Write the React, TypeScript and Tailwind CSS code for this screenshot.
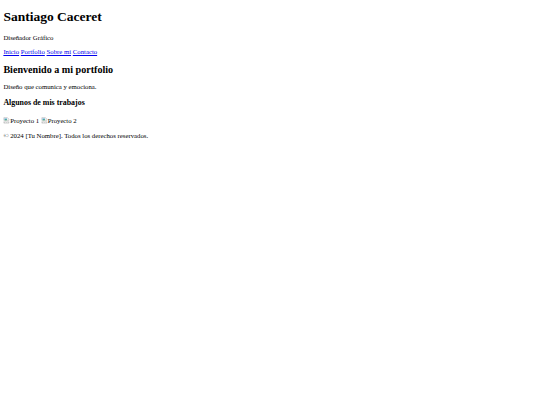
import React from "react";

// broken-image glyph, drawn small like the browser's placeholder
function BrokenImage() {
  return (
    <svg viewBox="0 0 16 16" className="inline-block w-[6.75px] h-[6.75px] align-[-0.5px]">
      <path d="M2 1.5h8.5l3.5 3.5v3l-2 1.5-2-1.5-2 1.5-2-1.5-2 1.5-2-1.5z" fill="#f5f5f5" stroke="#9a9a9a" />
      <path d="M2 11l2 1.5 2-1.5 2 1.5 2-1.5 2 1.5 2-1.5v3.5H2z" fill="#f5f5f5" stroke="#9a9a9a" />
      <rect x="3.5" y="3.5" width="6" height="4" fill="#5fa8e0" />
      <path d="M3.5 7.5l2-2 2 1.5 2-2v2.5z" fill="#4caf50" />
    </svg>
  );
}

const links = ["Inicio", "Portfolio", "Sobre mí", "Contacto"];

export default function App() {
  return (
    <div className="min-h-[405px] bg-white text-black px-[3.375px] pt-[9.05px] flex flex-col items-start font-['Liberation_Serif','Times_New_Roman',serif] leading-[normal]">
      <header className="flex flex-col items-start">
        <h1 className="text-[13.5px] font-bold">Santiago Caceret</h1>
        <p className="text-[6.75px] mt-[9.05px]">Diseñador Gráfico</p>
        <nav className="text-[6.75px] mt-[6.75px]">
          {links.map((l, i) => (
            <React.Fragment key={l}>
              {i > 0 && " "}
              <a href="#" className="text-[#0000ee] underline">
                {l}
              </a>
            </React.Fragment>
          ))}
        </nav>
      </header>

      <main className="flex flex-col items-start">
        <section className="flex flex-col items-start">
          <h2 className="text-[10.125px] font-bold mt-[8.9px]">Bienvenido a mi portfolio</h2>
          <p className="text-[6.75px] mt-[8.4px]">Diseño que comunica y emociona.</p>
        </section>
        <section className="flex flex-col items-start">
          <h3 className="text-[7.9px] font-bold mt-[7.9px]">Algunos de mis trabajos</h3>
          <div className="text-[6.75px] leading-[9px] mt-[9.4px]">
            <span>
              <BrokenImage />Proyecto 1
            </span>{" "}
            <span>
              <BrokenImage />Proyecto 2
            </span>
          </div>
        </section>
      </main>

      <footer>
        <p className="text-[6.75px] mt-[6.75px]">© 2024 [Tu Nombre]. Todos los derechos reservados.</p>
      </footer>
    </div>
  );
}
